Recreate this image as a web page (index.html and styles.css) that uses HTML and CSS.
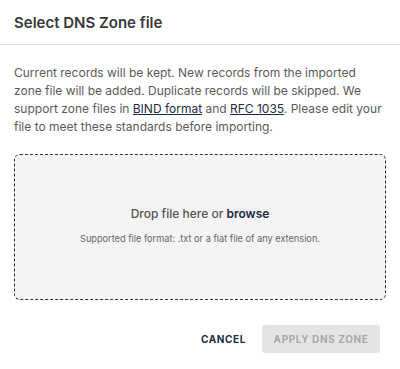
FILE: index.html
```html
<!DOCTYPE html>
<html>
<head>
<meta charset="utf-8">
<link rel="stylesheet" href="styles.css">
</head>
<body>
<div class="dialog">
  <header class="head">
    <h1 class="title">Select DNS Zone file</h1>
  </header>
  <div class="content">
    <p class="desc">Current records will be kept. New records from the imported zone file will be added. Duplicate records will be skipped. We support zone files in <a class="link" href="#">BIND format</a> and <a class="link" href="#">RFC 1035</a>. Please edit your file to meet these standards before importing.</p>
    <div class="drop">
      <div class="drop-main">Drop file here or <span class="browse">browse</span></div>
      <div class="drop-sub">Supported file format: .txt or a flat file of any extension.</div>
    </div>
  </div>
  <footer class="actions">
    <button class="btn btn-text">CANCEL</button>
    <button class="btn btn-disabled">APPLY DNS ZONE</button>
  </footer>
</div>
</body>
</html>
```
FILE: styles.css
```css
* { box-sizing: border-box; }
html, body { margin: 0; padding: 0; background: #fff; }
body { font-family: Inter, "Noto Sans", sans-serif; width: 400px; height: 369px; overflow: hidden; }
.dialog { display: flex; flex-direction: column; }
.head { height: 45px; border-bottom: 1px solid #e0e0e0; padding: 0 14px; display: flex; align-items: center; }
.title { margin: 0; font-size: 15px; font-weight: 600; color: #383838; letter-spacing: 0; }
.content { padding: 19px 14px 0; }
.desc { margin: 0; font-size: 12px; line-height: 18px; color: #5a5a5a; }
.link { color: #1d2b44; text-decoration: underline; }
.drop { margin-top: 18px; height: 146px; border: 1px dashed #2b3445; border-radius: 6px; background: #f4f4f4; display: flex; flex-direction: column; align-items: center; justify-content: center; gap: 12px; padding-bottom: 4px; }
.drop-main { font-size: 12px; font-weight: 500; color: #555; }
.browse { color: #1d2b44; font-weight: 600; }
.drop-sub { font-size: 9.2px; color: #666; }
.actions { display: flex; justify-content: flex-end; align-items: center; gap: 16px; padding: 25px 20px 0; }
.btn { font-family: Inter, "Noto Sans", sans-serif; font-size: 10px; font-weight: 700; letter-spacing: 0.6px; border: 0; border-radius: 3px; height: 28px; cursor: pointer; white-space: nowrap; }
.btn-text { background: transparent; color: #1d2b44; padding: 0 0; }
.btn-disabled { background: #e4e4e4; color: #a8a8a8; padding: 0 10px; min-width: 118px; }
```
